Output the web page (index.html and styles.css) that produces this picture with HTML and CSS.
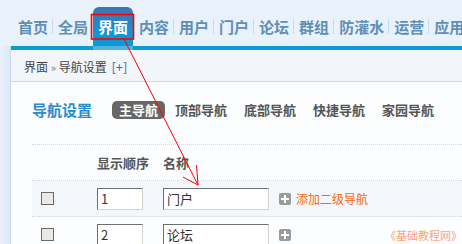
FILE: index.html
```html
<!DOCTYPE html>
<html lang="zh">
<head>
<meta charset="utf-8">
<link rel="stylesheet" href="styles.css">
</head>
<body>
<div class="page">
  <header class="top">
    <nav class="nav">
      <a class="item">首页</a><span class="sep"></span>
      <a class="item">全局</a>
      <a class="item active">界面</a>
      <a class="item">内容</a><span class="sep"></span>
      <a class="item">用户</a><span class="sep"></span>
      <a class="item">门户</a><span class="sep"></span>
      <a class="item">论坛</a><span class="sep"></span>
      <a class="item">群组</a><span class="sep"></span>
      <a class="item">防灌水</a><span class="sep"></span>
      <a class="item">运营</a><span class="sep"></span>
      <a class="item">应用</a>
    </nav>
  </header>
  <div class="frame">
    <aside class="side"></aside>
    <main class="main">
      <div class="crumb">界面 <span class="raquo">»</span> 导航设置 <span class="plus">[+]</span></div>
      <section class="body">
        <div class="titlebar">
          <h2 class="title">导航设置</h2>
          <div class="tabs">
            <span class="tab on">主导航</span>
            <span class="tab">顶部导航</span>
            <span class="tab">底部导航</span>
            <span class="tab">快捷导航</span>
            <span class="tab">家园导航</span>
          </div>
        </div>
        <div class="table">
          <div class="row head">
            <span></span>
            <span class="th">显示顺序</span>
            <span class="th">名称</span>
            <span></span>
          </div>
          <div class="row alt">
            <span class="cell"><span class="check"></span></span>
            <span class="cell"><span class="field short">1</span></span>
            <span class="cell"><span class="field long">门户</span></span>
            <span class="cell"><span class="addicon"></span><span class="addlink">添加二级导航</span></span>
          </div>
          <div class="row">
            <span class="cell"><span class="check"></span></span>
            <span class="cell"><span class="field short">2</span></span>
            <span class="cell"><span class="field long">论坛</span></span>
            <span class="cell"><span class="addicon"></span></span>
          </div>
        </div>
      </section>
    </main>
  </div>
  <div class="watermark">《基础教程网》</div>
  <svg class="annot" width="462" height="244" viewBox="0 0 462 244">
    <rect x="91.5" y="14.5" width="42" height="24.5" fill="none" stroke="#ff0000" stroke-width="1.6"/>
    <line x1="124" y1="39" x2="198" y2="185" stroke="#ff0000" stroke-width="1"/>
    <line x1="183" y1="177" x2="198" y2="185" stroke="#ff0000" stroke-width="1"/>
    <line x1="196.5" y1="165" x2="198" y2="185" stroke="#ff0000" stroke-width="1"/>
  </svg>
</div>
</body>
</html>
```
FILE: styles.css
```css
* { box-sizing: border-box; }
html, body { margin: 0; padding: 0; }
body {
  width: 462px;
  height: 244px;
  overflow: hidden;
  background: #e9f1fa;
  font-family: "Noto Sans CJK SC", "Noto Sans", "Liberation Sans", sans-serif;
}
.page {
  position: relative;
  width: 462px;
  height: 244px;
  overflow: hidden;
}
.top {
  height: 46px;
  padding-left: 13px;
  display: flex;
  align-items: flex-end;
}
.nav {
  display: flex;
  align-items: center;
  height: 39px;
  white-space: nowrap;
}
.item {
  display: block;
  font-size: 15px;
  font-weight: bold;
  line-height: 39px;
  color: #5f8fb4;
  padding: 0 4px 0 5px;
}
.item.active {
  position: relative;
  color: #ffffff;
  padding: 0 5px;
  margin-left: 1px;
  margin-right: 1px;
  border-radius: 6px 6px 0 0;
  background: linear-gradient(#3b76b2 0%, #2f81bf 35%, #0c97d6 65%, #0a9ad8 100%);
}
.item.active::after {
  content: "";
  position: absolute;
  left: 0;
  right: 0;
  bottom: -4px;
  height: 4px;
  background: #52b3de;
}
.sep {
  display: block;
  width: 1px;
  height: 15px;
  background: #c9dbea;
}
.frame {
  display: flex;
  height: 198px;
}
.side {
  width: 11px;
  flex: none;
  background: linear-gradient(to right, #eaf2fb, #dce9f6);
  border-right: 1px solid #c7dbec;
}
.main {
  flex: 1;
  border-top: 4px solid #0a9bd2;
  background: #fbfdfe;
  min-width: 0;
}
.crumb {
  height: 32px;
  padding-top: 3px;
  background: #f2f6fb;
  border-bottom: 1px solid #c7dbee;
  padding-left: 13px;
  font-size: 12px;
  line-height: 28px;
  color: #444;
  white-space: nowrap;
}
.raquo { color: #777; font-size: 11px; }
.plus { color: #3b6ca6; margin-left: 2px; font-size: 13px; }
.body {
  padding: 19px 0 0 21px;
}
.titlebar {
  display: flex;
  align-items: center;
  height: 18px;
  white-space: nowrap;
}
.title {
  margin: 0 20px 0 0;
  font-size: 15px;
  font-weight: bold;
  color: #2a8bcd;
  line-height: 18px;
}
.tabs { display: flex; }
.tab {
  display: block;
  font-size: 13px;
  font-weight: bold;
  color: #555;
  line-height: 18px;
  padding: 0 7px;
  margin-right: 3px;
}
.tab.on {
  background: #676767;
  color: #fff;
  border-radius: 5px;
}
.table {
  margin-top: 25px;
  border-top: 1px dotted #c5daec;
}
.row {
  display: grid;
  grid-template-columns: 65px 66px 116px 1fr;
  align-items: center;
  height: 36px;
  border-bottom: 1px dotted #c5daec;
}
.row.alt { background: #f3f7fb; }
.th {
  font-size: 13px;
  font-weight: bold;
  color: #555;
}
.cell {
  display: flex;
  align-items: center;
}
.check {
  display: block;
  width: 13px;
  height: 13px;
  margin-left: 9px;
  border: 1px solid #6a6a6a;
  background: #ece9e4;
}
.field {
  display: block;
  height: 22px;
  line-height: 20px;
  padding-left: 3px;
  font-size: 13px;
  color: #333;
  background: #fff;
  border: 1px solid;
  border-color: #6e6e6e #d6d2ca #d6d2ca #6e6e6e;
}
.short { width: 46px; }
.long { width: 106px; }
.addicon {
  position: relative;
  display: block;
  width: 12px;
  height: 12px;
  border-radius: 2px;
  background: #9b9b9b;
  margin-right: 5px;
}
.addicon::before, .addicon::after {
  content: "";
  position: absolute;
  background: #fff;
}
.addicon::before { left: 2px; right: 2px; top: 5px; height: 2px; }
.addicon::after { top: 2px; bottom: 2px; left: 5px; width: 2px; }
.addlink {
  font-size: 12px;
  color: #f66a10;
  white-space: nowrap;
}
.watermark {
  position: absolute;
  right: 0;
  bottom: 2px;
  font-size: 11px;
  line-height: 14px;
  color: #f9a37a;
  white-space: nowrap;
}
.annot {
  position: absolute;
  left: 0;
  top: 0;
  pointer-events: none;
}
```
